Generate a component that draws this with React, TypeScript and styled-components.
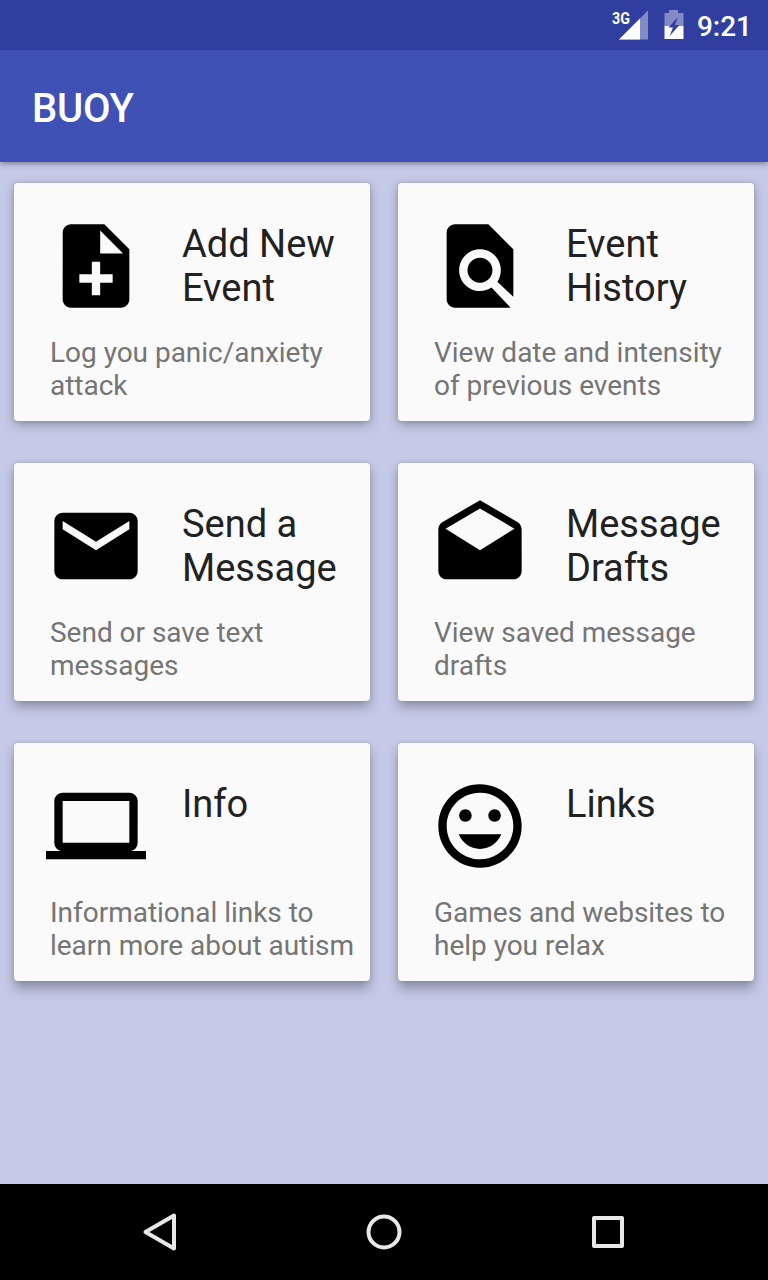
import type { ComponentType } from 'react'
import { MdComputer, MdDrafts, MdEmail, MdMood, MdNoteAdd } from 'react-icons/md'
import styled, { createGlobalStyle } from 'styled-components'

const GlobalStyle = createGlobalStyle`
  * {
    box-sizing: border-box;
  }

  body {
    margin: 0;
    font-family: Roboto, 'Liberation Sans', sans-serif;
  }
`

const Container = styled.div`
  display: flex;
  flex-direction: column;
  height: 1280px;
  width: 768px;
  overflow: hidden;
  background-color: #c5cae9;
`

const StatusBar = styled.div`
  display: flex;
  flex-shrink: 0;
  justify-content: flex-end;
  align-items: flex-start;
  height: 50px;
  padding-right: 16px;
  background-color: #303f9f;
  color: #fff;
  z-index: 2;  // Header 그림자가 덮지 않도록 설정
`

const Signal = styled.div`
  position: relative;
  height: 50px;
  margin-right: 16px;

  svg {
    display: block;
  }
`

// 네트워크 종류는 신호 아이콘 위에 겹쳐서 표시
const NetworkType = styled.span`
  position: absolute;
  top: 10px;
  left: 0;
  font-family: Roboto, sans-serif;
  font-size: 17px;
  font-weight: 700;
  line-height: 16px;
  transform: scaleX(0.84);
  transform-origin: left;
`

const Clock = styled.span`
  margin-left: 13px;
  font-size: 28px;
  font-weight: 500;
  line-height: 54px;
`

const Header = styled.header`
  display: flex;
  flex-shrink: 0;
  align-items: center;
  height: 112px;
  padding: 4px 32px 0;
  background-color: #3f51b5;
  box-shadow: 0 1px 6px rgba(0, 0, 0, 0.45);
  z-index: 1;
`

const HeaderTitle = styled.h1`
  margin: 0;
  color: #fff;
  font-size: 40px;
  font-weight: 500;
  letter-spacing: -0.2px;
`

const Content = styled.main`
  display: grid;
  grid-template-columns: 356px 356px;
  grid-auto-rows: 238px;
  align-content: start;
  gap: 42px 28px;
  flex: 1;
  padding: 21px 14px;
`

const Card = styled.section<{ $depth: number }>`
  padding: 33px 0 0 32px;
  border-radius: 4px;
  background-color: #fafafa;
  box-shadow:
    0 0 4px rgba(0, 0, 0, 0.14),
    0 ${(props) => props.$depth}px 12px rgba(0, 0, 0, 0.28);
`

const CardTop = styled.div`
  display: flex;
  height: 120px;

  svg {
    flex-shrink: 0;
    width: 100px;
    height: 100px;
    color: #000;
  }
`

const CardTitle = styled.h2`
  margin: 6px 0 0 36px;
  color: #212121;
  font-size: 38px;
  font-weight: 400;
  line-height: 44px;
`

const CardText = styled.p`
  margin: 0 0 0 4px;
  color: #757575;
  font-size: 28px;
  line-height: 33px;
  letter-spacing: -0.02px;
  white-space: pre-line;
`

const NavBar = styled.nav`
  display: flex;
  flex-shrink: 0;
  justify-content: center;
  align-items: center;
  gap: 176px;
  height: 96px;
  background-color: #000;
`

const NavIcon = styled.svg`
  width: 48px;
  height: 48px;
  fill: none;
  stroke: #e8e8e8;
  stroke-width: 4;
  stroke-linejoin: round;
`

const HistoryIcon = () => (
  <svg viewBox="0 0 24 24" fill="currentColor">
    <path d="M20 19.400V8l-6-6H6c-1.100 0-2 .9-2 2v16c0 1.100.9 2 2 2h13.350l-4.590-4.830c-.8.520-1.740.830-2.760.830-2.760 0-5-2.240-5-5s2.240-5 5-5 5 2.240 5 5c0 1.020-.310 1.960-.830 2.750L20 19.400zM9 13c0 1.660 1.340 3 3 3s3-1.340 3-3-1.340-3-3-3-3 1.340-3 3z" />
  </svg>
)

interface MenuItem {
  icon: ComponentType
  title: string
  text: string
  depth: number
}

const items: MenuItem[] = [
  { icon: MdNoteAdd, title: 'Add New Event', text: 'Log you panic/anxiety\nattack', depth: 4 },
  { icon: HistoryIcon, title: 'Event History', text: 'View date and intensity\nof previous events', depth: 4 },
  { icon: MdEmail, title: 'Send a Message', text: 'Send or save text\nmessages', depth: 6 },
  { icon: MdDrafts, title: 'Message Drafts', text: 'View saved message\ndrafts', depth: 6 },
  { icon: MdComputer, title: 'Info', text: 'Informational links to\nlearn more about autism', depth: 8 },
  { icon: MdMood, title: 'Links', text: 'Games and websites to\nhelp you relax', depth: 8 },
]

const App = () => {
  return (
    <Container>
      <GlobalStyle />
      <StatusBar>
        <Signal>
          <svg width="36" height="50" viewBox="0 0 36 50">
            <path d="M36 10.500V39.500H7z" fill="#fff" fillOpacity="0.4" />
            <path d="M28 18.500V39.500H7z" fill="#fff" />
          </svg>
          <NetworkType>3G</NetworkType>
        </Signal>
        <svg width="20" height="50" viewBox="0 0 20 50">
          <path d="M5 10h9v3h5.500v13H.5V13H5z" fill="#fff" fillOpacity="0.4" />
          <path d="M.5 26h19v13H.5z" fill="#fff" />
          <path d="M14 17L4.500 27.500h4.500L5.500 36l10-11H11z" fill="#303f9f" />
        </svg>
        <Clock>9:21</Clock>
      </StatusBar>
      <Header>
        <HeaderTitle>BUOY</HeaderTitle>
      </Header>
      <Content>
        {items.map(({ icon: Icon, title, text, depth }) => (
          <Card key={title} $depth={depth}>
            <CardTop>
              <Icon />
              <CardTitle>{title}</CardTitle>
            </CardTop>
            <CardText>{text}</CardText>
          </Card>
        ))}
      </Content>
      <NavBar>
        <NavIcon viewBox="0 0 48 48">
          <path d="M38 7.500v33L9.500 24z" />
        </NavIcon>
        <NavIcon viewBox="0 0 48 48">
          <circle cx="24" cy="24" r="15.500" />
        </NavIcon>
        <NavIcon viewBox="0 0 48 48">
          <rect x="10" y="10" width="28" height="28" />
        </NavIcon>
      </NavBar>
    </Container>
  )
}

export default App
